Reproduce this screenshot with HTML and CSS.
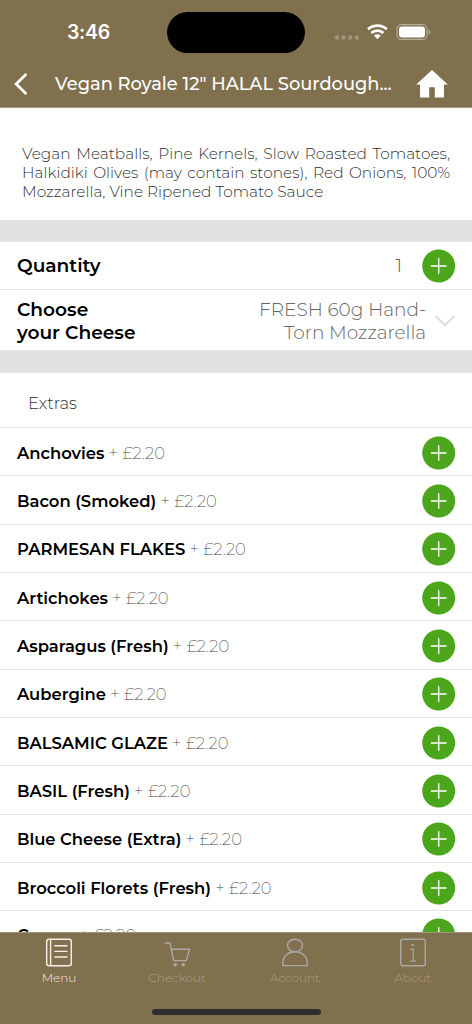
FILE: index.html
```html
<!DOCTYPE html>
<html lang="en">
<head>
<meta charset="utf-8">
<title>Vegan Royale 12" HALAL Sourdough</title>
<link rel="stylesheet" href="styles.css">
</head>
<body>
<svg width="0" height="0" class="defs">
  <symbol id="plus" viewBox="0 0 34 34"><circle cx="16.700" cy="17" r="16.5" fill="#4ca61c"/><path d="M16.700 9.200v15.600M8.900 17h15.600" stroke="#fff" stroke-width="1.4"/></symbol>
</svg>
<div class="phone">
  <header class="header">
    <div class="status">
      <span class="time">3:46</span>
      <span class="island"></span>
      <svg class="indicators" width="98" height="20" viewBox="0 0 98 20">
        <g fill="#a2957b"><circle cx="3" cy="15.5" r="2.2"/><circle cx="9.6" cy="15.5" r="2.2"/><circle cx="16.2" cy="15.5" r="2.2"/><circle cx="22.8" cy="15.5" r="2.2"/></g>
        <g fill="none" stroke="#fff" stroke-width="2.7"><path d="M34 7.3a14 14 0 0 1 18.800 0"/><path d="M37.300 11a9 9 0 0 1 12.200 0"/></g>
        <path d="M40 13.600a5.300 5.300 0 0 1 6.800 0L43.400 17.300z" fill="#fff"/>
        <rect x="63" y="2.600" width="30" height="14.800" rx="4.600" fill="none" stroke="#b5ab98" stroke-width="1.200"/>
        <rect x="65" y="4.600" width="26" height="10.800" rx="3" fill="#fff"/>
        <path d="M94.700 7.500q1.800 .5 1.800 2.500t-1.800 2.500z" fill="#b5ab98"/>
      </svg>
    </div>
    <div class="nav">
      <svg class="back" width="14" height="24" viewBox="0 0 14 24"><path d="M11.500 2.800L2.200 12l9.300 9.200" fill="none" stroke="#fff" stroke-width="2.800" stroke-linecap="round"/></svg>
      <h1 class="title">Vegan Royale 12" HALAL Sourdough...</h1>
      <svg class="home" width="32" height="28" viewBox="0 0 32 28"><path d="M16 0L31.800 14.500H28V27.500H18.800V17.300H13.200V27.500H4V14.500H.2z" fill="#fff"/></svg>
    </div>
  </header>
  <main class="content">
    <div class="description">
      <p class="line">Vegan Meatballs, Pine Kernels, Slow Roasted Tomatoes,</p>
      <p class="line">Halkidiki Olives (may contain stones), Red Onions, 100%</p>
      <p class="line last">Mozzarella, Vine Ripened Tomato Sauce</p>
    </div>
    <section class="options">
      <div class="option quantity"><span class="label">Quantity</span><span class="count">1</span><svg class="plus"><use href="#plus"/></svg></div>
      <div class="option cheese"><span class="label">Choose<br>your Cheese</span><span class="value">FRESH 60g Hand-<br>Torn Mozzarella</span>
        <svg class="chevron" width="22" height="14" viewBox="0 0 22 14"><path d="M2 2.500l9 8.500 9-8.500" fill="none" stroke="#dedee0" stroke-width="2" stroke-linecap="round"/></svg></div>
    </section>
    <section class="extras">
      <h2 class="heading">Extras</h2>
      <div class="row"><b class="name">Anchovies</b><span class="price">+ £2.20</span><svg class="plus"><use href="#plus"/></svg></div>
      <div class="row"><b class="name">Bacon (Smoked)</b><span class="price">+ £2.20</span><svg class="plus"><use href="#plus"/></svg></div>
      <div class="row"><b class="name">PARMESAN FLAKES</b><span class="price">+ £2.20</span><svg class="plus"><use href="#plus"/></svg></div>
      <div class="row"><b class="name">Artichokes</b><span class="price">+ £2.20</span><svg class="plus"><use href="#plus"/></svg></div>
      <div class="row"><b class="name">Asparagus (Fresh)</b><span class="price">+ £2.20</span><svg class="plus"><use href="#plus"/></svg></div>
      <div class="row"><b class="name">Aubergine</b><span class="price">+ £2.20</span><svg class="plus"><use href="#plus"/></svg></div>
      <div class="row"><b class="name">BALSAMIC GLAZE</b><span class="price">+ £2.20</span><svg class="plus"><use href="#plus"/></svg></div>
      <div class="row"><b class="name">BASIL (Fresh)</b><span class="price">+ £2.20</span><svg class="plus"><use href="#plus"/></svg></div>
      <div class="row"><b class="name">Blue Cheese (Extra)</b><span class="price">+ £2.20</span><svg class="plus"><use href="#plus"/></svg></div>
      <div class="row"><b class="name">Broccoli Florets (Fresh)</b><span class="price">+ £2.20</span><svg class="plus"><use href="#plus"/></svg></div>
      <div class="row last-row"><b class="name">Capers</b><span class="price">+ £2.20</span><svg class="plus"><use href="#plus"/></svg></div>
    </section>
  </main>
  <footer class="tabs">
    <nav class="tablist">
      <a class="tab active"><svg width="30" height="30" viewBox="0 0 30 30"><rect x="2.700" y="2.200" width="24.600" height="26.600" rx="2.500"/><path d="M6.600 2.500v26M10.300 8.800H23.500M10.300 14.400H23.500M10.300 20H23.500"/></svg><span>Menu</span></a>
      <a class="tab"><svg width="30" height="30" viewBox="0 0 30 30"><path d="M2.700 6H8L11.700 23.600H24.300L27.500 12.300H9.300"/><g fill="#aaa9a6" stroke="none"><circle cx="13.300" cy="27.700" r="1.800"/><circle cx="21.300" cy="27.700" r="1.800"/></g></svg><span>Checkout</span></a>
      <a class="tab"><svg width="30" height="30" viewBox="0 0 30 30"><ellipse cx="15" cy="8.500" rx="7.500" ry="6.300"/><path d="M2.700 28.600V26.200C2.700 19.500 8 14.800 15 14.800S27.300 19.500 27.300 26.200V28.600z"/></svg><span>Account</span></a>
      <a class="tab"><svg width="30" height="30" viewBox="0 0 30 30"><rect x="2.700" y="2.200" width="24.600" height="26.600" rx="2"/><path d="M12.300 12.300H15.200V24M12 24H18" stroke-width="1.200"/><circle cx="14.600" cy="8" r="1.200" fill="#aaa9a6" stroke="none"/></svg><span>About</span></a>
    </nav>
    <div class="home-indicator"></div>
  </footer>
</div>
</body>
</html>
```
FILE: styles.css
```css
* { box-sizing: border-box; margin: 0; padding: 0; }
body { background: #fff; font-family: Montserrat, Inter, "Noto Sans", sans-serif; color: #000; }
.defs { display: block; }
.phone { width: 472px; height: 1024px; display: grid; grid-template-columns: 472px; grid-template-rows: 108px 824px 92px; overflow: hidden; }
.header { background: #80704e; border-bottom: 1px solid #a89c82; color: #fff; }
.status { height: 60px; padding: 12px 40px 0 67px; display: grid; grid-template-columns: 100px 138px 1fr; }
.time { font-family: Inter, sans-serif; font-size: 19.500px; font-weight: 600; line-height: 41px; letter-spacing: -.3px; }
.island { height: 41px; border-radius: 21px; background: #000; }
.indicators { margin: 10px 0 0 29px; }
.nav { height: 47px; display: grid; grid-template-columns: 55px 345px 72px; align-items: center; }
.back { margin-left: 14px; }
.title { font-size: 17.850px; font-weight: 500; white-space: nowrap; }
.home { margin-left: 16px; }
.content { overflow: hidden; background: #fff; }
.description { height: 134px; padding: 37px 22px 0; border-bottom: 22px solid #e2e2e4; color: #303030; font-size: 15.350px; font-weight: 300; line-height: 18.800px; }
.line { text-align-last: justify; white-space: nowrap; }
.line.last { text-align-last: left; }
.options { border-bottom: 23px solid #e2e2e4; }
.option { display: flex; align-items: center; padding-left: 17px; padding-right: 16px; }
.quantity { height: 48px; border-bottom: 1px solid #e3e3e4; }
.label { flex: 1; padding-top: 2px; font-size: 18.600px; font-weight: 600; line-height: 22.500px; }
.count { font-size: 18.600px; font-weight: 300; color: #606060; margin-right: 20px; }
.plus { width: 34px; height: 34px; flex: none; }
.cheese { height: 60px; }
.cheese .label, .value { padding-top: 3px; }
.value { font-size: 18.500px; font-weight: 300; line-height: 22.500px; text-align: right; color: #666; }
.chevron { margin: 2px 0 0 8px; }
.extras { overflow: hidden; }
.heading { height: 54.900px; border-bottom: 1px solid #e3e3e4; padding-left: 28px; color: #303030; font-size: 16.400px; font-weight: 300; line-height: 61px; }
.row { height: 48.330px; border-bottom: 1px solid #e3e3e4; display: flex; align-items: center; padding: 2px 16px 0 17px; }
.last-row { padding-top: 0; }
.name { font-size: 16.400px; font-weight: 600; }
.price { flex: 1; margin-left: 4.200px; font-size: 16.400px; font-weight: 200; color: #444; word-spacing: .5px; }
.tabs { background: #80704e; border-top: 1px solid #a1947a; padding-top: 4px; }
.tablist { display: grid; grid-template-columns: repeat(4, 1fr); height: 72px; }
.tab { display: flex; flex-direction: column; align-items: center; color: #aaa08a; font-size: 12px; font-weight: 300; line-height: 22px; }
.tab svg { fill: none; stroke: #aaa9a6; stroke-width: 1.400; }
.tab.active { color: #f4f1eb; }
.tab.active svg { stroke: #f4f1eb; }
.home-indicator { width: 169px; height: 6px; border-radius: 3px; background: #2d2d2d; margin: 0 auto; }
```
